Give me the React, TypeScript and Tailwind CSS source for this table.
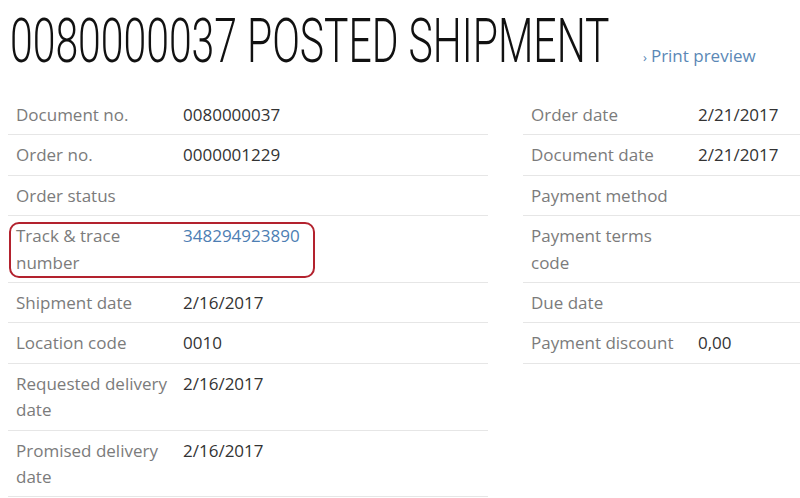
type Row = {
  label: string;
  value?: string;
  link?: boolean;
  marked?: boolean;
};

const leftRows: Row[] = [
  { label: 'Document no.', value: '0080000037' },
  { label: 'Order no.', value: '0000001229' },
  { label: 'Order status' },
  { label: 'Track & trace number', value: '348294923890', link: true, marked: true },
  { label: 'Shipment date', value: '2/16/2017' },
  { label: 'Location code', value: '0010' },
  { label: 'Requested delivery date', value: '2/16/2017' },
  { label: 'Promised delivery date', value: '2/16/2017' },
];

const rightRows: Row[] = [
  { label: 'Order date', value: '2/21/2017' },
  { label: 'Document date', value: '2/21/2017' },
  { label: 'Payment method' },
  { label: 'Payment terms code' },
  { label: 'Due date' },
  { label: 'Payment discount', value: '0,00' },
];

const InfoTable = ({ rows }: { rows: Row[] }) => (
  <div className="w-[480px] shrink-0 flex flex-col">
    {rows.map((row) => (
      <div
        key={row.label}
        className="relative flex border-b border-[#e6e6e6] pt-[7px] pb-[6px] text-[17px] leading-[26.4px]"
      >
        <div className="w-[175px] shrink-0 pl-2 pr-[10px] text-[#7b7b7b]">{row.label}</div>
        <div className={row.link ? 'text-[#4d7eb3]' : 'text-[#333]'}>{row.value}</div>
        {/* highlight drawn over the row */}
        {row.marked && (
          <div className="absolute left-[1px] top-[6px] w-[306px] h-[56px] rounded-[10px] border-2 border-[#b3222e]" />
        )}
      </div>
    ))}
  </div>
);

export default function App() {
  return (
    <div
      className="w-[800px] h-[498px] overflow-hidden bg-white"
      style={{ fontFamily: '"Open Sans", "Liberation Sans", sans-serif' }}
    >
      <div className="h-[95px] flex items-baseline pt-[10px]">
        <h1
          className="w-[631px] shrink-0 pl-[10px] text-[62px] leading-[62px] font-light text-[#111] whitespace-nowrap"
          style={{ fontFamily: 'Roboto, "Liberation Sans", sans-serif' }}
        >
          <span className="inline-block origin-left scale-x-[0.66]">0080000037 POSTED SHIPMENT</span>
        </h1>
        <a className="ml-[12px] text-[17px] text-[#5b88b6] whitespace-nowrap">
          <span className="text-[13px] mr-[4px]">›</span>Print preview
        </a>
      </div>
      <div className="flex gap-[35px] pl-2">
        <InfoTable rows={leftRows} />
        <InfoTable rows={rightRows} />
      </div>
    </div>
  );
}
